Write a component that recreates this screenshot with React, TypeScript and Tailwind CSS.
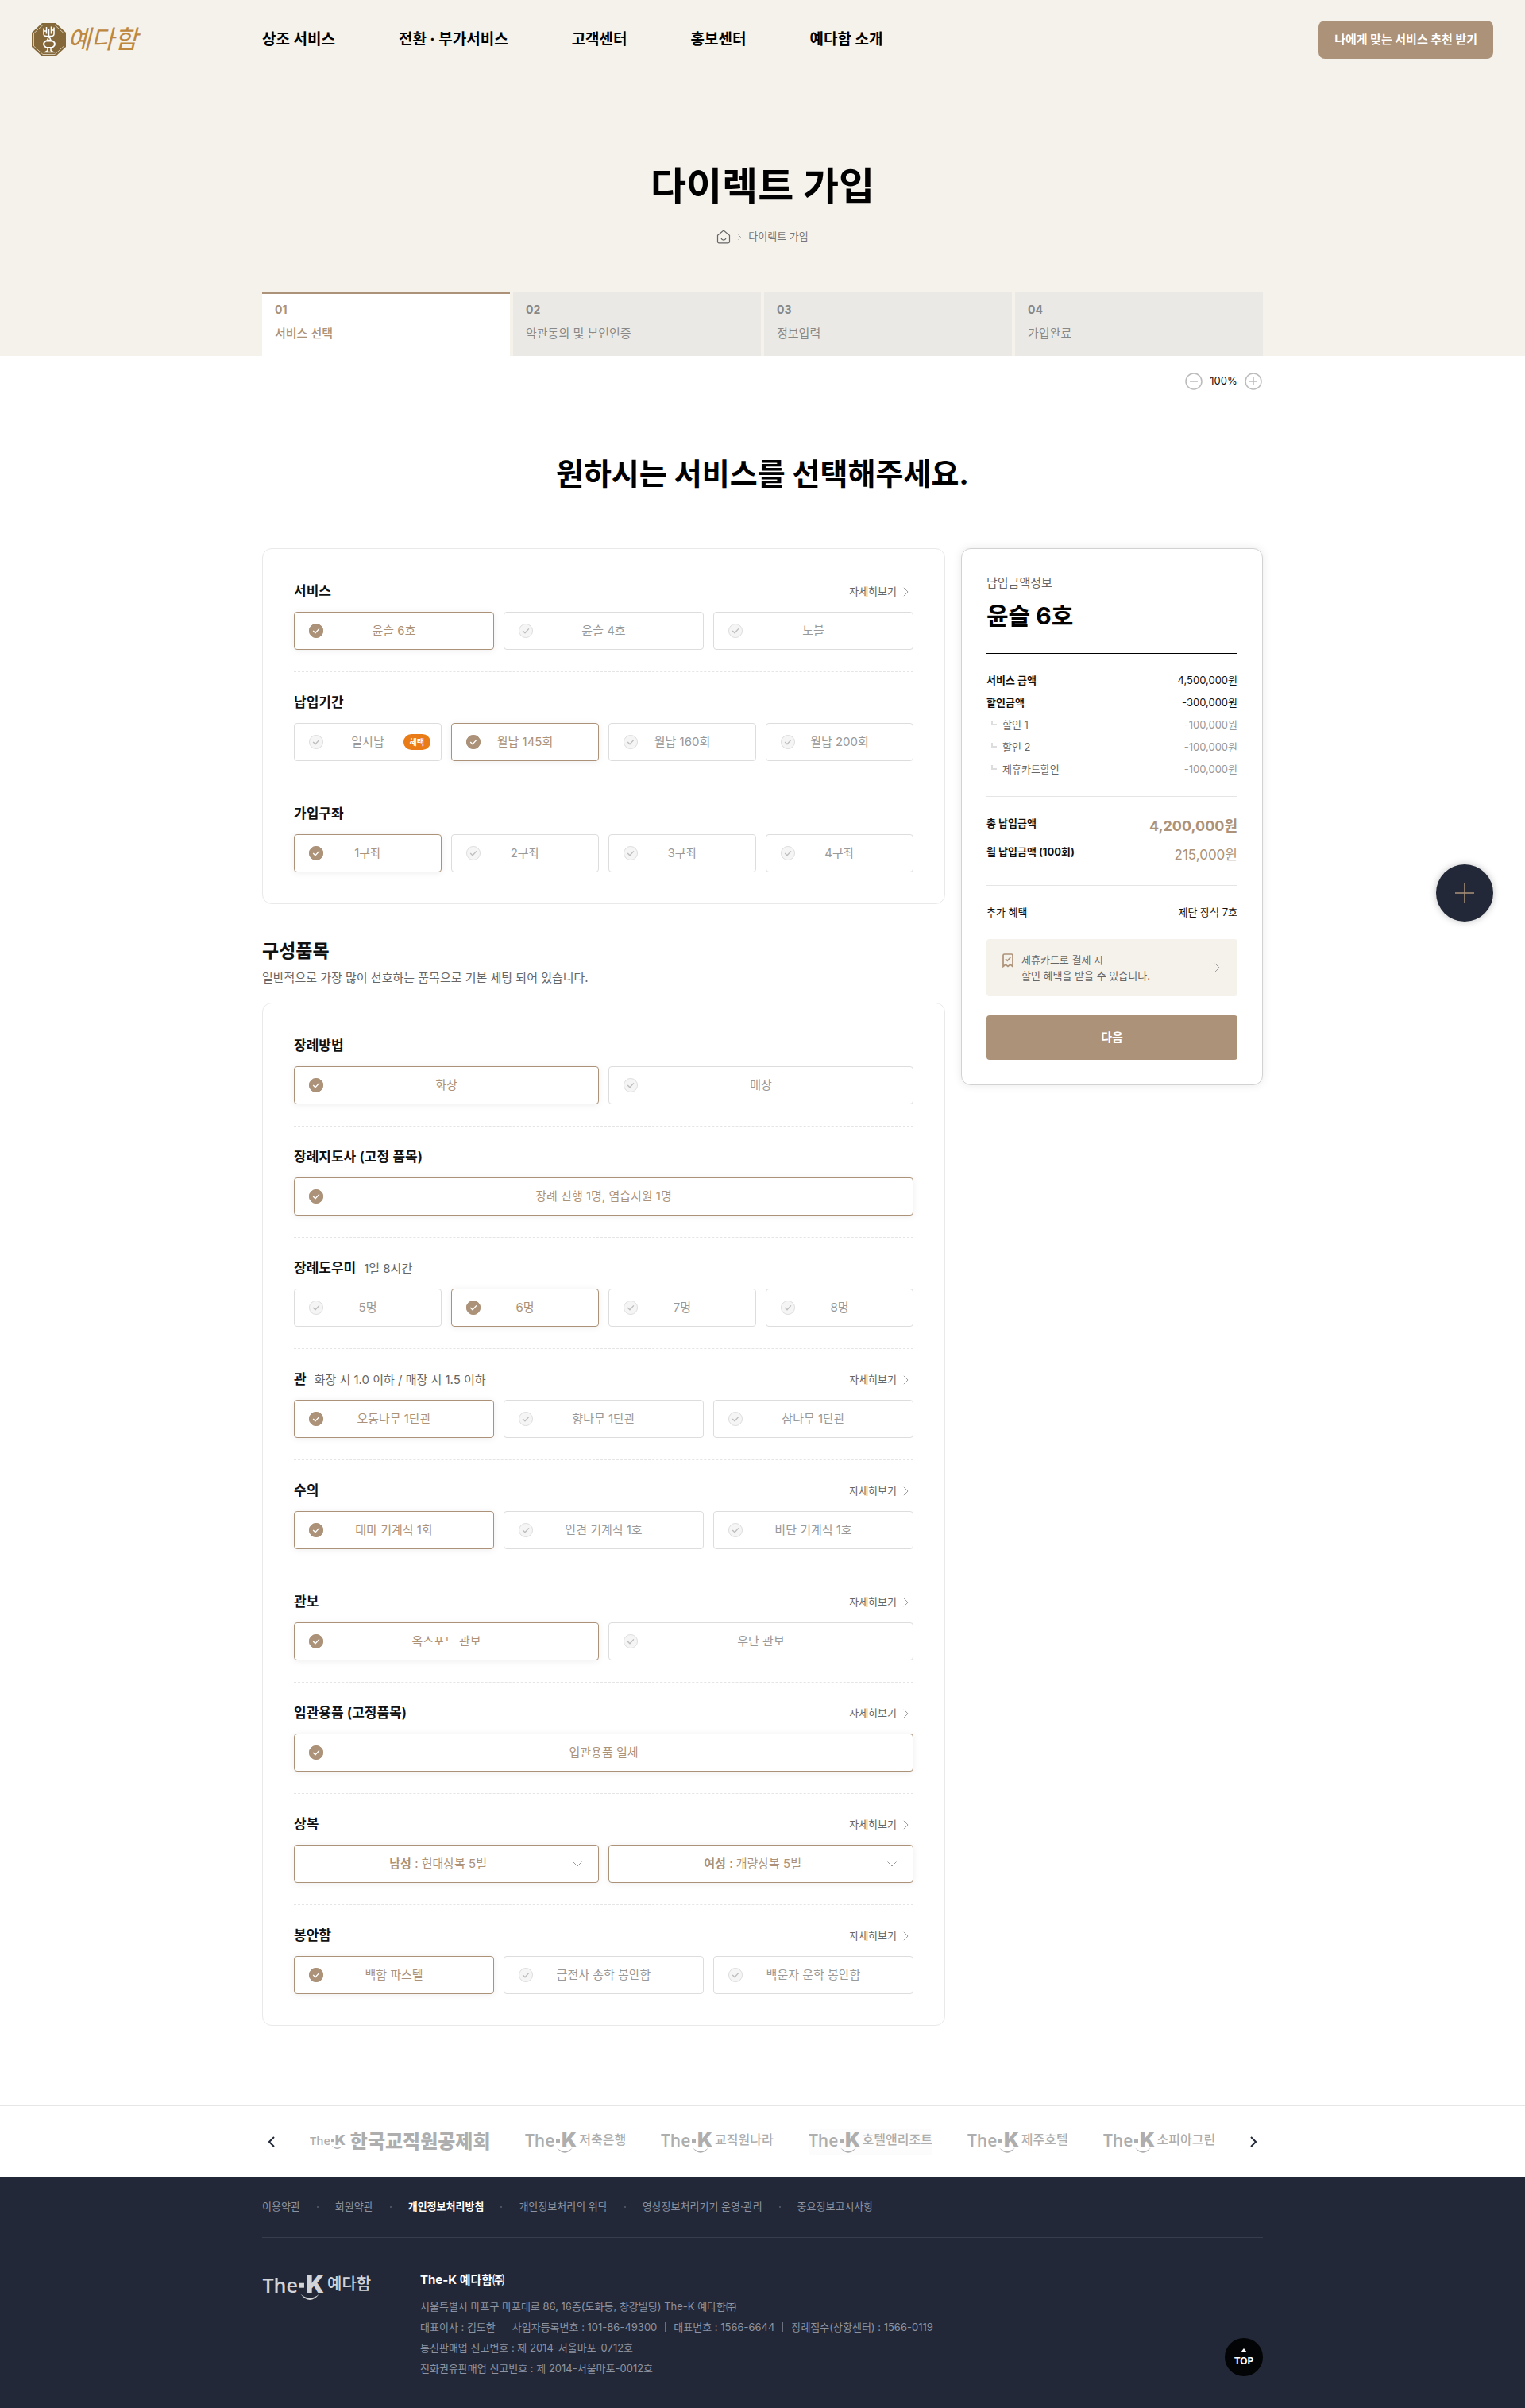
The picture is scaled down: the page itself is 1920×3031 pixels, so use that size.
import React from "react";

const navItems = ["상조 서비스", "전환 · 부가서비스", "고객센터", "홍보센터", "예다함 소개"];

const steps = [
  { no: "01", label: "서비스 선택" },
  { no: "02", label: "약관동의 및 본인인증" },
  { no: "03", label: "정보입력" },
  { no: "04", label: "가입완료" },
];

type Option = { label: string; badge?: string };
type OptionGroup = {
  id: string;
  title: string;
  note?: string;
  detail?: boolean;
  options: Option[];
  selected: number;
  fixed?: boolean;
};

const serviceGroups: OptionGroup[] = [
  { id: "service", title: "서비스", detail: true, selected: 0, options: [{ label: "윤슬 6호" }, { label: "윤슬 4호" }, { label: "노블" }] },
  {
    id: "period",
    title: "납입기간",
    selected: 1,
    options: [{ label: "일시납", badge: "혜택" }, { label: "월납 145회" }, { label: "월납 160회" }, { label: "월납 200회" }],
  },
  { id: "account", title: "가입구좌", selected: 0, options: [{ label: "1구좌" }, { label: "2구좌" }, { label: "3구좌" }, { label: "4구좌" }] },
];

const itemGroups: OptionGroup[] = [
  { id: "method", title: "장례방법", selected: 0, options: [{ label: "화장" }, { label: "매장" }] },
  { id: "director", title: "장례지도사 (고정 품목)", selected: 0, fixed: true, options: [{ label: "장례 진행 1명, 염습지원 1명" }] },
  { id: "helper", title: "장례도우미", note: "1일 8시간", selected: 1, options: [{ label: "5명" }, { label: "6명" }, { label: "7명" }, { label: "8명" }] },
  {
    id: "coffin",
    title: "관",
    note: "화장 시 1.0 이하 / 매장 시 1.5 이하",
    detail: true,
    selected: 0,
    options: [{ label: "오동나무 1단관" }, { label: "향나무 1단관" }, { label: "삼나무 1단관" }],
  },
  { id: "shroud", title: "수의", detail: true, selected: 0, options: [{ label: "대마 기계직 1회" }, { label: "인견 기계직 1호" }, { label: "비단 기계직 1호" }] },
  { id: "cover", title: "관보", detail: true, selected: 0, options: [{ label: "옥스포드 관보" }, { label: "우단 관보" }] },
  { id: "supplies", title: "입관용품 (고정품목)", detail: true, selected: 0, fixed: true, options: [{ label: "입관용품 일체" }] },
];

const urnGroup: OptionGroup = {
  id: "urn",
  title: "봉안함",
  detail: true,
  selected: 0,
  options: [{ label: "백합 파스텔" }, { label: "금전사 송학 봉안함" }, { label: "백운자 운학 봉안함" }],
};

const columns: Record<number, string> = {
  1: "grid-cols-1",
  2: "grid-cols-2",
  3: "grid-cols-3",
  4: "grid-cols-4",
};

function Chevron({ className }: { className: string }) {
  return (
    <svg viewBox="0 0 8 14" fill="none" stroke="currentColor" className={className} aria-hidden="true">
      <path d="M1 1l6 6-6 6" vectorEffect="non-scaling-stroke" />
    </svg>
  );
}

function CheckMark() {
  return (
    <svg
      viewBox="0 0 18 18"
      fill="none"
      aria-hidden="true"
      className="absolute left-[18px] size-[18px] text-[#f5f5f5] group-has-checked:text-[#ac9278]"
    >
      <circle cx="9" cy="9" r="9" fill="currentColor" />
      <circle cx="9" cy="9" r="8.5" className="stroke-[#dedede] group-has-checked:stroke-[#ac9278]" />
      <path d="M5.2 9l2.8 2.8 4.9-5.4" strokeWidth="1.4" className="stroke-[#bdbdbd] group-has-checked:stroke-white" />
    </svg>
  );
}

function SectionHead({ title, note, detail }: { title: string; note?: string; detail?: boolean }) {
  return (
    <div className="mb-2.5 flex h-[30px] items-center justify-between">
      <div className="flex items-baseline gap-2.5">
        <h4 className="text-[17px] font-semibold text-[#111]">{title}</h4>
        {note && <span className="text-[15px] text-[#666]">{note}</span>}
      </div>
      {detail && (
        <a href="#detail" className="flex items-center gap-2 pr-1.5 text-[13px] text-[#666]">
          자세히보기
          <Chevron className="h-3 w-[7px] text-[#999]" />
        </a>
      )}
    </div>
  );
}

function Section({ children }: { children: React.ReactNode }) {
  return (
    <section className="border-b border-dashed border-[#e5e5e5] pt-6 pb-[27px] first:pt-0 last:border-b-0 last:pb-0">{children}</section>
  );
}

function OptionSection({ group }: { group: OptionGroup }) {
  return (
    <Section>
      <SectionHead title={group.title} note={group.note} detail={group.detail} />
      <div className={`grid gap-3 ${columns[group.options.length]}`}>
        {group.options.map((o, i) => (
          <label
            key={o.label}
            className="group relative flex h-12 cursor-pointer items-center justify-center rounded border border-[#ddd] bg-white text-[15px] text-[#999] has-checked:border-[#ac9278] has-checked:text-[#ac9278] has-checked:shadow-[0_1px_8px_rgba(0,0,0,0.07)]"
          >
            <input
              type={group.fixed ? "checkbox" : "radio"}
              name={group.id}
              defaultChecked={i === group.selected}
              className="sr-only"
            />
            <CheckMark />
            {o.label}
            {o.badge && (
              <span className="absolute right-[13px] flex h-5 items-center rounded-full bg-[#ea7c17] px-2 text-[10px] font-bold text-white">
                {o.badge}
              </span>
            )}
          </label>
        ))}
      </div>
    </Section>
  );
}

function ClothesSelect({ id, label, value }: { id: string; label: string; value: string }) {
  return (
    <div className="relative flex h-12 items-center justify-center rounded border border-[#ac9278] bg-white pr-5 text-[15px] text-[#ac9278] shadow-[0_1px_8px_rgba(0,0,0,0.07)]">
      <label htmlFor={id} className="whitespace-pre">
        <strong className="font-bold">{label}</strong>
        {" : "}
      </label>
      <select id={id} className="h-full appearance-none bg-transparent">
        <option>{value}</option>
      </select>
      <svg viewBox="0 0 12 7" fill="none" className="pointer-events-none absolute right-5 h-[7px] w-3 stroke-[#999]" aria-hidden="true">
        <path d="M.5.5L6 6 11.5.5" />
      </svg>
    </div>
  );
}

function TheKMark({ className }: { className: string }) {
  return (
    <svg viewBox="0 -6 68 36" fill="currentColor" className={className} aria-hidden="true">
      <text x="0" y="18" fontSize="21" fontWeight="600" fontFamily="'Open Sans', sans-serif">
        The
      </text>
      <rect x="39" y="8" width="5" height="5" />
      <text x="46" y="18" fontSize="25" fontWeight="900" fontFamily="Inter, sans-serif">
        K
      </text>
      <path d="M40 19.500q10 12.500 20 0-10 8.500-20 0z" />
    </svg>
  );
}

function Emblem() {
  return (
    <svg viewBox="0 0 43 42" className="h-[42px] w-[43px]" fill="none" aria-hidden="true">
      <path d="M13 0h17l13 12v18L30 42H13L0 30V12z" fill="#84683a" />
      <path d="M14 2.500h15l11.500 10.500v16L29 39.500H14L2.500 29V13z" stroke="#e9e0cd" strokeWidth=".8" />
      <g stroke="#fff" strokeWidth="1.500">
        <path d="M15 6.500v7q0 3 3.500 3h6q3.500 0 3.500-3v-8M18.500 5v8.500M21.500 7v10M24.500 4.500v9M14.500 10h4M24.500 9h4" />
        <path d="M21.500 17l-2 4.500h4.500l-2-4.500" />
        <path d="M18 22.500h8q3 1.500 3 4 0 2.500-3.500 4.500h-7q-3.500-2-3.500-4.500 0-2.500 3-4z" strokeWidth="1.800" />
        <path d="M20 31.500v3l-3 2h10l-3-2v-3" />
      </g>
    </svg>
  );
}

const discounts = ["할인 1", "할인 2", "제휴카드할인"];

function Summary() {
  return (
    <aside className="w-[380px] shrink-0 rounded-xl border border-[#d2d2d2] bg-white px-[31px] pt-8 pb-[31px] shadow-[0_0_12px_rgba(0,0,0,0.09)]">
      <p className="text-[15px] leading-[22px] text-[#666]">납입금액정보</p>
      <h3 className="mt-2 text-[30px] leading-[44px] font-bold text-black">윤슬 6호</h3>
      <dl className="mt-[25px] border-t border-black pt-[19px] text-[13px] leading-[28px] text-[#111]">
        <div className="flex justify-between">
          <dt className="font-bold">서비스 금액</dt>
          <dd>4,500,000원</dd>
        </div>
        <div className="flex justify-between">
          <dt className="font-bold">할인금액</dt>
          <dd>-300,000원</dd>
        </div>
        {discounts.map((d) => (
          <div key={d} className="flex justify-between">
            <dt className="flex items-center pl-1.5 text-[#666]">
              <span className="mr-[7px] mb-1 h-[6px] w-[7px] border-b-2 border-l-2 border-[#ddd]" />
              {d}
            </dt>
            <dd className="text-[#999]">-100,000원</dd>
          </div>
        ))}
      </dl>
      <dl className="mt-5 flex flex-col gap-2 border-t border-[#e5e5e5] pt-[23px] text-[13px] leading-[20px] text-[#111]">
        <div className="flex justify-between">
          <dt className="font-bold">총 납입금액</dt>
          <dd className="text-[18px] leading-[28px] font-bold text-[#ac9278]">4,200,000원</dd>
        </div>
        <div className="flex justify-between">
          <dt className="font-bold">월 납입금액 (100회)</dt>
          <dd className="text-[17px] leading-[28px] text-[#ac9278]">215,000원</dd>
        </div>
      </dl>
      <dl className="mt-6 flex justify-between border-t border-[#e5e5e5] pt-[23px] text-[13px] leading-[20px] text-[#111]">
        <dt>추가 혜택</dt>
        <dd>제단 장식 7호</dd>
      </dl>
      <a href="#card" className="mt-6 flex h-[72px] items-center rounded bg-[#f5f2ec] pr-[22px] pl-5 text-[13px] leading-[20px] text-[#666]">
        <svg viewBox="0 0 14 18" fill="none" stroke="#ac9278" strokeWidth="1.700" className="mb-[19px] h-[18px] w-3.5" aria-hidden="true">
          <path d="M1 2.500C1 1.500 1.500 1 2.500 1h9c1 0 1.500.5 1.500 1.500V16.500l-3-2.500-3 2.500-3-2.500-3 2.500z" />
          <path d="M4 7l2.300 2.300L10.300 5" />
        </svg>
        <span className="ml-2.5 flex-1">
          제휴카드로 결제 시<br />
          할인 혜택을 받을 수 있습니다.
        </span>
        <Chevron className="h-3 w-[7px] text-[#999]" />
      </a>
      <button type="button" className="mt-6 h-14 w-full rounded bg-[#ac9278] text-[15px] font-bold text-white">
        다음
      </button>
    </aside>
  );
}

const partners = [
  { name: "저축은행", box: "" },
  { name: "교직원나라", box: "" },
  { name: "호텔앤리조트", box: "bg-[#fcfcfc]" },
  { name: "제주호텔", box: "" },
  { name: "소피아그린", box: "" },
];
const footerLinks = ["이용약관", "회원약관", "개인정보처리방침", "개인정보처리의 위탁", "영상정보처리기기 운영·관리", "중요정보고시사항"];
const companyFacts = ["대표이사 : 김도한", "사업자등록번호 : 101-86-49300", "대표번호 : 1566-6644", "장례접수(상황센터) : 1566-0119"];

export default function App() {
  return (
    <div className="relative bg-white font-['Inter','Noto_Sans_CJK_KR',sans-serif]" lang="ko">
      <div className="bg-[#f5f2ec]">
        <header className="flex h-[100px] items-center px-10">
          <a href="#home" className="flex w-[290px] shrink-0 items-center gap-0.5" aria-label="예다함">
            <Emblem />
            <span className="text-[32px] leading-[42px] font-normal text-[#bd873e] italic">예다함</span>
          </a>
          <nav className="flex flex-1 gap-20 text-[19px] font-bold text-black">
            {navItems.map((n) => (
              <a key={n} href="#menu">
                {n}
              </a>
            ))}
          </nav>
          <a href="#recommend" className="flex h-12 items-center rounded-lg bg-[#ac9278] px-5 text-[15px] font-bold text-white">
            나에게 맞는 서비스 추천 받기
          </a>
        </header>

        <div className="mx-auto max-w-[1260px] pt-[99px]">
          <h1 className="text-center text-[49px] leading-[72px] font-bold text-black">다이렉트 가입</h1>
          <div className="mt-[17px] flex h-5 items-center justify-center text-[13px] text-[#777]">
            <a href="#home" aria-label="홈">
              <svg viewBox="0 0 18 18" fill="none" stroke="#666" strokeWidth="1.200" className="size-[18px]" aria-hidden="true">
                <path d="M1.500 7.200L9 1l7.500 6.200V15c0 1.200-.6 1.800-1.800 1.800H3.300c-1.200 0-1.800-.6-1.800-1.800z" />
                <path d="M5.800 10.500c.8 2 1.800 2.700 3.200 2.700s2.400-.7 3.200-2.700" />
              </svg>
            </a>
            <Chevron className="mx-[9px] h-[7px] w-1 text-[#999]" />
            <span>다이렉트 가입</span>
          </div>
          <ol className="mt-[60px] grid grid-cols-4 gap-1">
            {steps.map((s, i) => (
              <li
                key={s.no}
                className={
                  i === 0
                    ? "h-20 border-t-2 border-[#ac9278] bg-white px-4 pt-[9px] text-[#ac9278]"
                    : "h-20 border-t-2 border-[#eae9e5] bg-[#eae9e5] px-4 pt-[9px] text-[#888]"
                }
              >
                <div className="text-[14px] leading-[22px] font-bold">{s.no}</div>
                <div className={i === 0 ? "mt-2 text-[15px] leading-[22px] font-medium" : "mt-2 text-[15px] leading-[22px]"}>{s.label}</div>
              </li>
            ))}
          </ol>
        </div>
      </div>

      <main className="mx-auto max-w-[1260px]">
        <div className="flex items-center justify-end gap-2 pt-[21px] pr-px text-[13px] text-[#111]">
          <button type="button" aria-label="축소">
            <svg viewBox="0 0 22 22" fill="none" stroke="#bbb" strokeWidth="1.500" className="size-[22px]">
              <circle cx="11" cy="11" r="10" />
              <path d="M6 11h10" />
            </svg>
          </button>
          <span className="w-[37px] text-center">100%</span>
          <button type="button" aria-label="확대">
            <svg viewBox="0 0 22 22" fill="none" stroke="#bbb" strokeWidth="1.500" className="size-[22px]">
              <circle cx="11" cy="11" r="10" />
              <path d="M6 11h10M11 6v10" />
            </svg>
          </button>
        </div>
        <h2 className="mt-[77px] text-center text-[38px] leading-[56px] font-bold text-black">원하시는 서비스를 선택해주세요.</h2>

        <div className="mt-[66px] flex items-start gap-5">
          <div className="min-w-0 flex-1">
            <div className="rounded-xl border border-[#e9e9e9] bg-white p-[39px]">
              {serviceGroups.map((g) => (
                <OptionSection key={g.id} group={g} />
              ))}
            </div>

            <h3 className="mt-[42px] text-[23px] leading-[34px] font-bold text-[#111]">구성품목</h3>
            <p className="mt-1.5 text-[15px] leading-[22px] text-[#666]">일반적으로 가장 많이 선호하는 품목으로 기본 세팅 되어 있습니다.</p>

            <div className="mt-5 rounded-xl border border-[#e9e9e9] bg-white p-[39px]">
              {itemGroups.map((g) => (
                <OptionSection key={g.id} group={g} />
              ))}
              <Section>
                <SectionHead title="상복" detail />
                <div className="grid grid-cols-2 gap-3">
                  <ClothesSelect id="men" label="남성" value="현대상복 5벌" />
                  <ClothesSelect id="women" label="여성" value="개량상복 5벌" />
                </div>
              </Section>
              <OptionSection group={urnGroup} />
            </div>
          </div>
          <Summary />
        </div>
      </main>

      <div className="mt-[100px] border-t border-[#e6e6e6]">
        <div className="mx-auto flex h-[89px] max-w-[1260px] items-center justify-between px-2 text-[#aeaeae]">
          <button type="button" aria-label="이전" className="text-[#222837]">
            <Chevron className="h-3.5 w-2 rotate-180 stroke-2" />
          </button>
          <a href="#partner" className="flex items-center gap-1" aria-label="The-K 한국교직원공제회">
            <TheKMark className="h-[25px] w-[47px]" />
            <span className="text-[24px] leading-[28px] font-black">한국교직원공제회</span>
          </a>
          {partners.map((p) => (
            <a key={p.name} href="#partner" className={`flex h-8 items-center ${p.box}`} aria-label={`The-K ${p.name}`}>
              <TheKMark className="h-9 w-[68px]" />
              <span className="pb-1.5 text-[16px] leading-[20px] font-medium">{p.name}</span>
            </a>
          ))}
          <button type="button" aria-label="다음" className="text-[#222837]">
            <Chevron className="h-3.5 w-2 stroke-2" />
          </button>
        </div>
      </div>

      <footer className="bg-[#222837] text-[13px] text-[#8d93a1]">
        <div className="mx-auto max-w-[1260px]">
          <ul className="flex h-[77px] items-center border-b border-[#373d4b]">
            {footerLinks.map((l, i) => (
              <li key={l} className="flex items-center">
                {i > 0 && <span className="mx-[21px] size-[2px] bg-[#4a5060]" />}
                <a href="#policy" className={i === 2 ? "font-bold text-white" : ""}>
                  {l}
                </a>
              </li>
            ))}
          </ul>
          <div className="flex h-[214px] items-start pt-10">
            <div className="flex w-[199px] shrink-0 items-center text-[#d3d4d7]">
              <TheKMark className="h-[43px] w-[82px]" />
              <span className="pb-2 text-[20px] leading-[26px] font-medium">예다함</span>
            </div>
            <address className="flex-1 leading-[26px] not-italic">
              <strong className="mb-[7px] block text-[15px] font-bold text-white">The-K 예다함㈜</strong>
              <p>서울특별시 마포구 마포대로 86, 16층(도화동, 창강빌딩) The-K 예다함㈜</p>
              <p className="flex items-center">
                {companyFacts.map((f, i) => (
                  <span key={f} className="flex items-center">
                    {i > 0 && <span className="mx-2.5 h-3 w-px bg-[#6a707e]" />}
                    {f}
                  </span>
                ))}
              </p>
              <p>통신판매업 신고번호 : 제 2014-서울마포-0712호</p>
              <p>전화권유판매업 신고번호 : 제 2014-서울마포-0012호</p>
            </address>
            <a
              href="#top"
              className="mb-10 flex size-12 flex-col items-center justify-center gap-1 self-end rounded-full bg-[#030406] text-[12px] leading-[14px] font-bold text-white"
            >
              <svg viewBox="0 0 8 5" className="h-[5px] w-2 fill-white" aria-hidden="true">
                <path d="M4 0l4 5H0z" />
              </svg>
              TOP
            </a>
          </div>
        </div>
      </footer>

      <button
        type="button"
        aria-label="빠른 메뉴"
        className="absolute top-[1088px] right-10 flex size-[72px] items-center justify-center rounded-full bg-[#222837] shadow-[0_0_10px_rgba(0,0,0,0.25)]"
      >
        <svg viewBox="0 0 24 24" fill="none" stroke="#ac9278" strokeWidth="1.500" className="size-6">
          <path d="M0 12h24M12 0v24" />
        </svg>
      </button>
    </div>
  );
}
